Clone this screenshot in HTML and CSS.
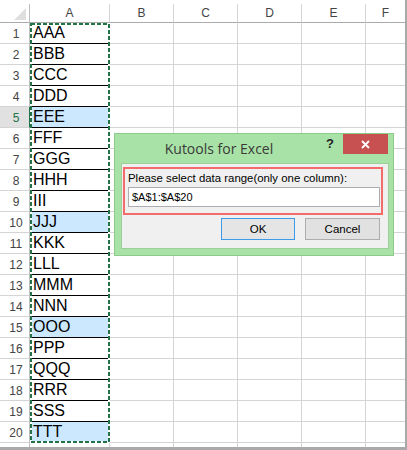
FILE: index.html
```html
<!DOCTYPE html>
<html>
<head>
<meta charset="utf-8">
<link rel="stylesheet" href="styles.css">
</head>
<body>
<div class="sheet">
  <div class="grid">
    <div class="corner"><svg width="29" height="18" viewBox="0 0 29 18"><polygon points="26,4 26,16 14,16" fill="#dfdfdf"/></svg></div>
    <div class="ch">A</div><div class="ch">B</div><div class="ch">C</div><div class="ch">D</div><div class="ch">E</div><div class="ch last">F</div>

    <div class="rh">1</div><div class="a">AAA</div><div class="c"></div><div class="c"></div><div class="c"></div><div class="c"></div><div class="c last"></div>
    <div class="rh">2</div><div class="a">BBB</div><div class="c"></div><div class="c"></div><div class="c"></div><div class="c"></div><div class="c last"></div>
    <div class="rh">3</div><div class="a">CCC</div><div class="c"></div><div class="c"></div><div class="c"></div><div class="c"></div><div class="c last"></div>
    <div class="rh">4</div><div class="a">DDD</div><div class="c"></div><div class="c"></div><div class="c"></div><div class="c"></div><div class="c last"></div>
    <div class="rh act">5</div><div class="a sel">EEE</div><div class="c"></div><div class="c"></div><div class="c"></div><div class="c"></div><div class="c last"></div>
    <div class="rh">6</div><div class="a">FFF</div><div class="c"></div><div class="c"></div><div class="c"></div><div class="c"></div><div class="c last"></div>
    <div class="rh">7</div><div class="a">GGG</div><div class="c"></div><div class="c"></div><div class="c"></div><div class="c"></div><div class="c last"></div>
    <div class="rh">8</div><div class="a">HHH</div><div class="c"></div><div class="c"></div><div class="c"></div><div class="c"></div><div class="c last"></div>
    <div class="rh">9</div><div class="a">III</div><div class="c"></div><div class="c"></div><div class="c"></div><div class="c"></div><div class="c last"></div>
    <div class="rh">10</div><div class="a sel">JJJ</div><div class="c"></div><div class="c"></div><div class="c"></div><div class="c"></div><div class="c last"></div>
    <div class="rh">11</div><div class="a">KKK</div><div class="c"></div><div class="c"></div><div class="c"></div><div class="c"></div><div class="c last"></div>
    <div class="rh">12</div><div class="a">LLL</div><div class="c"></div><div class="c"></div><div class="c"></div><div class="c"></div><div class="c last"></div>
    <div class="rh">13</div><div class="a">MMM</div><div class="c"></div><div class="c"></div><div class="c"></div><div class="c"></div><div class="c last"></div>
    <div class="rh">14</div><div class="a">NNN</div><div class="c"></div><div class="c"></div><div class="c"></div><div class="c"></div><div class="c last"></div>
    <div class="rh">15</div><div class="a sel">OOO</div><div class="c"></div><div class="c"></div><div class="c"></div><div class="c"></div><div class="c last"></div>
    <div class="rh">16</div><div class="a">PPP</div><div class="c"></div><div class="c"></div><div class="c"></div><div class="c"></div><div class="c last"></div>
    <div class="rh">17</div><div class="a">QQQ</div><div class="c"></div><div class="c"></div><div class="c"></div><div class="c"></div><div class="c last"></div>
    <div class="rh">18</div><div class="a">RRR</div><div class="c"></div><div class="c"></div><div class="c"></div><div class="c"></div><div class="c last"></div>
    <div class="rh">19</div><div class="a">SSS</div><div class="c"></div><div class="c"></div><div class="c"></div><div class="c"></div><div class="c last"></div>
    <div class="rh">20</div><div class="a sel end">TTT</div><div class="c"></div><div class="c"></div><div class="c"></div><div class="c"></div><div class="c last"></div>
    <div class="rh"></div><div class="c"></div><div class="c"></div><div class="c"></div><div class="c"></div><div class="c"></div><div class="c last"></div>
  </div>

  <div class="marquee">
    <svg width="80" height="420" viewBox="0 0 80 420">
      <rect x="1" y="1" width="78" height="418" fill="none" stroke="#ffffff" stroke-width="2"/>
      <rect x="1" y="1" width="78" height="418" fill="none" stroke="#217346" stroke-width="2" stroke-dasharray="4 2"/>
    </svg>
  </div>

  <div class="dialog">
    <div class="titlebar">
      <div class="title">Kutools for Excel</div>
      <div class="help">?</div>
      <div class="close"><svg width="9" height="9" viewBox="0 0 9 9"><path d="M1 1 L8 8 M8 1 L1 8" stroke="#ffffff" stroke-width="1.8" fill="none"/></svg></div>
    </div>
    <div class="panel">
      <div class="range">
        <div class="label">Please select data range(only one column):</div>
        <div class="input">$A$1:$A$20</div>
      </div>
      <div class="btns">
        <div class="btn ok">OK</div>
        <div class="btn cancel">Cancel</div>
      </div>
    </div>
  </div>
</div>
</body>
</html>
```

FILE: styles.css
```css
html, body {
  margin: 0;
  padding: 0;
  background: #a9a9a9;
}
body {
  width: 407px;
  height: 450px;
  overflow: hidden;
  font-family: "Liberation Sans", Arial, sans-serif;
}
.sheet {
  position: relative;
  width: 405px;
  height: 447px;
  box-sizing: border-box;
  padding-top: 4px;
  background: #ffffff;
  overflow: hidden;
}
.grid {
  display: grid;
  grid-template-columns: 30px 80px 64px 64px 64px 64px 1fr;
  grid-template-rows: 19px repeat(21, 21px);
}
.grid > div {
  box-sizing: border-box;
}
.corner {
  border-right: 1px solid #bdbdbd;
  border-bottom: 1px solid #ababab;
}
.corner svg { display: block; }
.ch {
  border-right: 1px solid #d4d4d4;
  border-bottom: 1px solid #ababab;
  text-align: center;
  font-size: 12px;
  line-height: 18px;
  color: #444444;
}
.rh {
  border-right: 1px solid #bdbdbd;
  border-bottom: 1px solid #d4d4d4;
  text-align: center;
  font-size: 12px;
  line-height: 18px;
  padding-top: 2px;
  padding-left: 3px;
  color: #444444;
}
.rh.act {
  background: #e1e1e1;
  color: #217346;
  border-right-color: #217346;
}
.a {
  border-right: 1px solid #d4d4d4;
  border-bottom: 1px solid #000000;
  font-size: 16px;
  line-height: 20px;
  padding-left: 3px;
  color: #000000;
}
.a.sel { background: #cce8ff; }
.a.end { border-bottom-color: #d4d4d4; }
.c {
  border-right: 1px solid #d4d4d4;
  border-bottom: 1px solid #d4d4d4;
}
.last { border-right: none !important; }

.marquee {
  position: absolute;
  left: 30px;
  top: 23px;
  width: 80px;
  height: 420px;
}
.marquee svg { display: block; }

.dialog {
  position: absolute;
  left: 114px;
  top: 133px;
  width: 280px;
  height: 123px;
  box-sizing: border-box;
  background: #a8e2a6;
  border: 1px solid #8ccb8a;
  padding: 0 4px 6px 6px;
}
.titlebar {
  display: flex;
  align-items: flex-start;
  height: 29px;
}
.title {
  flex: 1;
  text-align: center;
  font-family: "Open Sans", sans-serif;
  font-size: 14px;
  line-height: 29px;
  color: #3a3a3a;
}
.help {
  width: 26px;
  height: 20px;
  text-align: center;
  font-weight: bold;
  font-size: 13px;
  line-height: 19px;
  color: #222222;
}
.close {
  width: 45px;
  height: 20px;
  margin-right: 1px;
  background: #c75050;
  display: flex;
  align-items: center;
  justify-content: center;
}
.close svg { display: block; }
.panel {
  height: 86px;
  box-sizing: border-box;
  background: #f0f0f0;
  border: 1px solid #9dcf9b;
  padding: 3px 5px 0 1px;
}
.range {
  width: 260px;
  height: 48px;
  box-sizing: border-box;
  border: 2px solid #f46b6b;
  padding: 2px 0 0 3px;
}
.label {
  font-size: 11.4px;
  line-height: 14px;
  color: #000000;
  white-space: nowrap;
}
.input {
  margin-top: 2px;
  width: 252px;
  height: 20px;
  box-sizing: border-box;
  border: 1px solid #abadb3;
  background: #ffffff;
  padding-left: 3px;
  font-size: 11px;
  line-height: 18px;
  color: #000000;
}
.btns {
  display: flex;
  justify-content: flex-end;
  gap: 10px;
  margin-top: 3px;
  padding-right: 3px;
}
.btn {
  height: 22px;
  box-sizing: border-box;
  text-align: center;
  font-size: 11.5px;
  line-height: 20px;
  color: #000000;
  background: #e1e1e1;
  border: 1px solid #adadad;
}
.ok {
  width: 74px;
  border-color: #3c9ae6;
  background: #e5e5e5;
}
.cancel {
  width: 75px;
}
```
